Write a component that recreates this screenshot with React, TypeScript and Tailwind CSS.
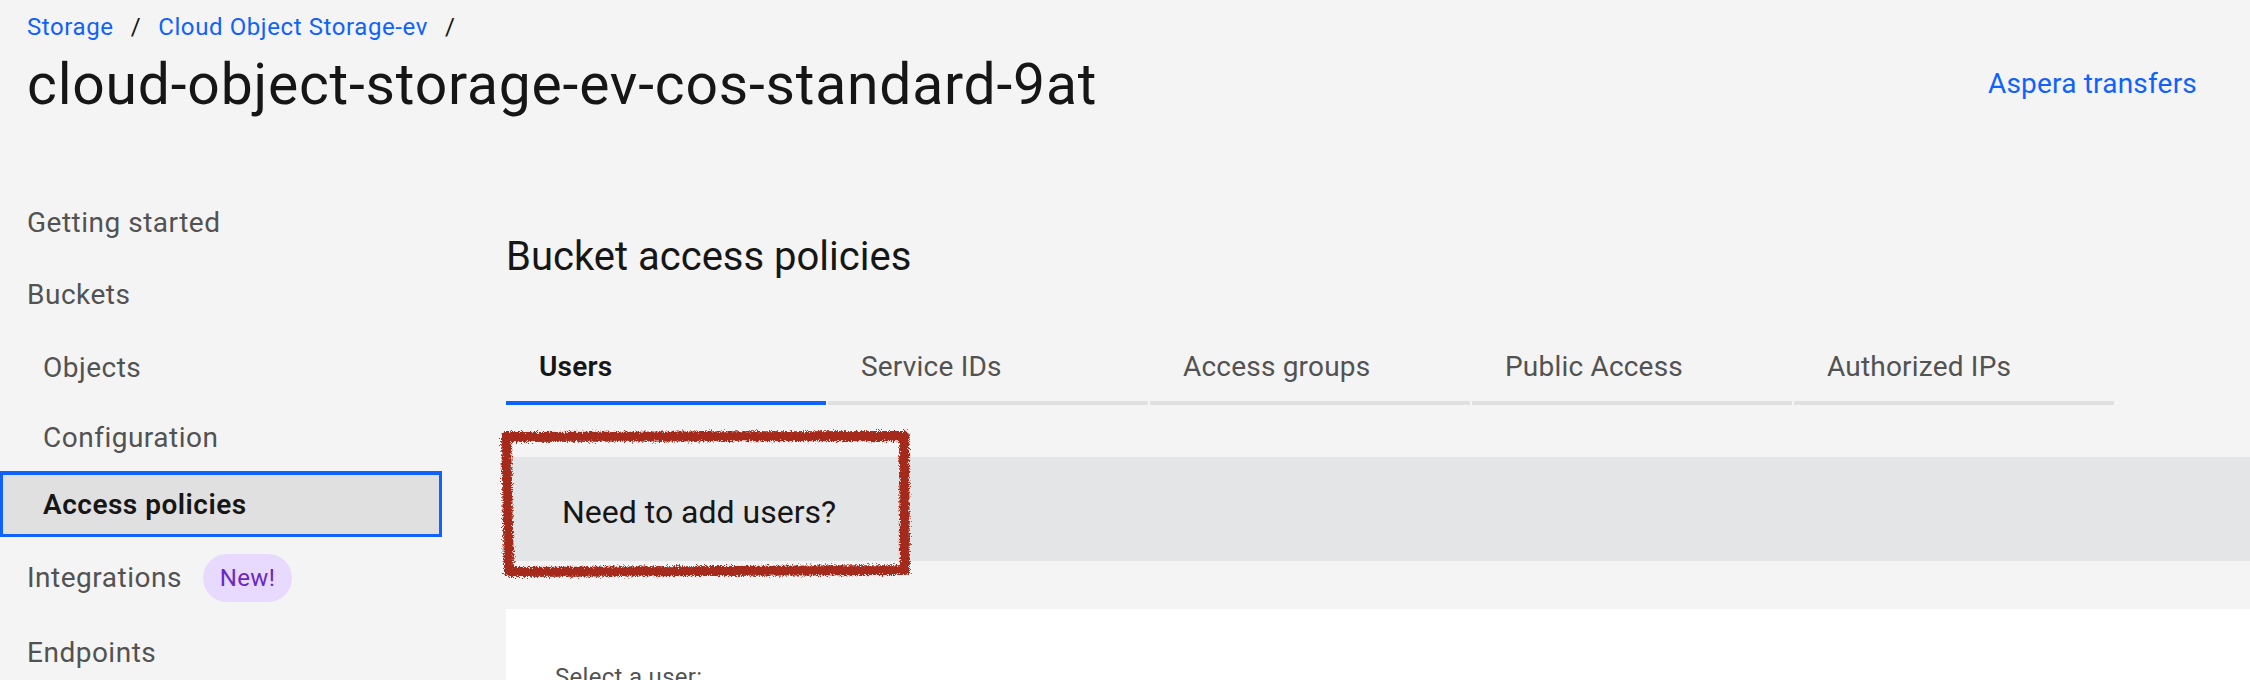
import React from "react";

const font = { fontFamily: "Roboto, 'Liberation Sans', sans-serif" };

function NavItem({
  label,
  level = 1,
  h,
  active = false,
  badge,
}: {
  label: string;
  level?: number;
  h: string;
  active?: boolean;
  badge?: string;
}) {
  return (
    <div
      className={`flex items-center ${h} ${
        active
          ? "border-[3px] border-t-[4px] border-[#0f62fe] bg-[#e0e0e0] pl-[40px] font-semibold text-[#161616]"
          : `${level === 2 ? "pl-[43px]" : "pl-[27px]"} text-[#525252]`
      } text-[28px] leading-[36px] tracking-[0.5px]`}
    >
      <span>{label}</span>
      {badge && (
        <span className="ml-[21px] flex h-[48px] items-center rounded-full bg-[#e8daff] px-[17px] text-[24px] leading-[32px] tracking-[0.3px] text-[#6929c4]">
          {badge}
        </span>
      )}
    </div>
  );
}

export default function App() {
  const tabs = ["Users", "Service IDs", "Access groups", "Public Access", "Authorized IPs"];
  return (
    <div className="h-[680px] w-[2250px] overflow-hidden bg-[#f4f4f4]" style={font}>
      {/* Header */}
      <div className="pl-[27px] pr-[53px] pt-[11px]">
        <div className="flex h-[32px] items-center text-[24px] leading-[32px] tracking-[0.6px]">
          <span className="text-[#0f62fe]">Storage</span>
          <span className="mx-[17px] text-[#161616]">/</span>
          <span className="text-[#0f62fe]">Cloud Object Storage-ev</span>
          <span className="mx-[17px] text-[#161616]">/</span>
        </div>
        <div className="mt-[10px] flex items-start justify-between">
          <h1 className="text-[57px] leading-[64px] tracking-[0.8px] text-[#161616]">
            cloud-object-storage-ev-cos-standard-9at
          </h1>
          <span className="mt-[11px] text-[28px] leading-[40px] tracking-[0.2px] text-[#0f62fe]">
            Aspera transfers
          </span>
        </div>
      </div>

      {/* Body */}
      <div className="mt-[70px] flex">
        <nav className="flex w-[442px] shrink-0 flex-col">
          <NavItem label="Getting started" h="h-[72px]" />
          <NavItem label="Buckets" h="h-[72px]" />
          <NavItem label="Objects" level={2} h="h-[73px]" />
          <NavItem label="Configuration" level={2} h="h-[67px]" />
          <NavItem label="Access policies" level={2} h="h-[66px]" active />
          <NavItem label="Integrations" h="h-[81px]" badge="New!" />
          <NavItem label="Endpoints" h="h-[70px]" />
        </nav>

        <main className="ml-[64px] flex-1">
          <h2 className="mt-[46px] text-[40px] leading-[48px] text-[#161616]">Bucket access policies</h2>

          <div className="mt-[66px] flex gap-[2px]">
            {tabs.map((t, i) => (
              <div key={t} className="w-[320px]">
                <div
                  className={`pl-[33px] text-[28px] leading-[40px] tracking-[0.2px] ${
                    i === 0 ? "font-semibold text-[#161616]" : "text-[#525252]"
                  }`}
                >
                  {t}
                </div>
                <div className={`mt-[14px] h-[4px] ${i === 0 ? "bg-[#0f62fe]" : "bg-[#e0e0e0]"}`} />
              </div>
            ))}
          </div>

          <div className="relative mt-[52px] flex h-[104px] items-center bg-[#e4e5e6] pl-[56px] pt-[6px]">
            <span className="text-[32px] leading-[40px] text-[#161616]">Need to add users?</span>
            <svg
              className="absolute left-[-5px] top-[-24px] overflow-visible"
              width="408"
              height="143"
              viewBox="0 0 408 143"
            >
              <defs>
                <filter id="rough" x="-10%" y="-10%" width="120%" height="120%">
                  <feTurbulence type="fractalNoise" baseFrequency="1.4" numOctaves="3" seed="7" result="n" />
                  <feDisplacementMap in="SourceGraphic" in2="n" scale="7" xChannelSelector="R" yChannelSelector="G" />
                </filter>
              </defs>
              <path
                d="M5 4 L403 3 L404 137 L8 139 Z"
                fill="none"
                stroke="#a52a1a"
                strokeWidth="10"
                strokeLinejoin="round"
                filter="url(#rough)"
              />
            </svg>
          </div>

          <div className="mt-[48px] h-[200px] bg-white pl-[49px] pt-[52px]">
            <span className="text-[24px] leading-[32px] tracking-[0.3px] text-[#525252]">Select a user:</span>
          </div>
        </main>
      </div>
    </div>
  );
}
